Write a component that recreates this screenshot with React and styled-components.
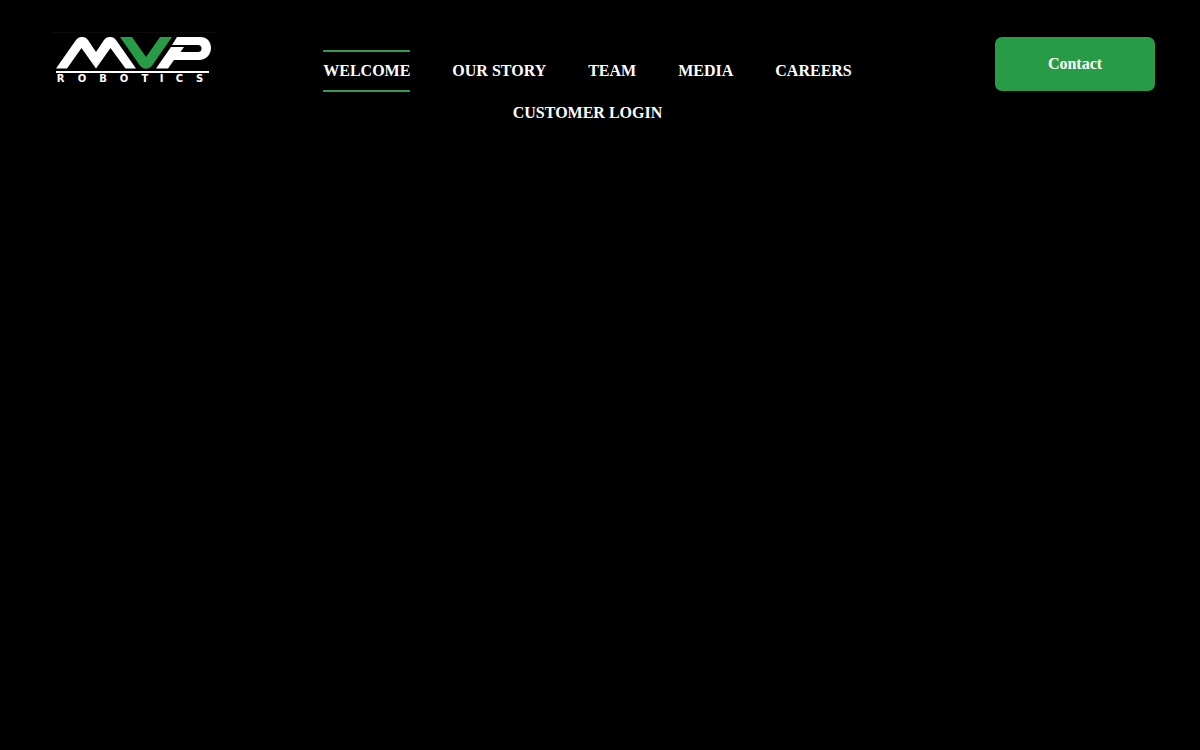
import React from 'react';
import styled, { createGlobalStyle } from 'styled-components';

const GlobalStyle = createGlobalStyle`
  * {
    box-sizing: border-box;
  }

  body {
    margin: 0;
    min-height: 100vh;
    background-color: #000;
    color: #fff;
    font-family: 'Liberation Serif', 'Times New Roman', serif;
    font-size: 16px;
  }
`;

const HeaderContainer = styled.header`
  display: flex;
  align-items: flex-start;
  padding: 32px 45px 0 52px;
`;

const LogoLink = styled.a`
  flex: 0 0 164px;
  border-top: 1px solid #0b0b0b;

  svg {
    display: block;
    width: 100%;
    height: auto;
  }
`;

const Nav = styled.nav`
  flex: 1;
  padding: 18px 100px 0 64px;
`;

const Menu = styled.ul`
  display: flex;
  flex-wrap: wrap;
  justify-content: center;
  column-gap: 42px;
  margin: 0;
  padding: 0;
  list-style: none;
`;

const MenuLink = styled.a`
  display: block;
  border-top: 2px solid ${(props) => (props.$active ? '#319b56' : 'transparent')};
  border-bottom: 2px solid ${(props) => (props.$active ? '#319b56' : 'transparent')};
  color: #fff;
  font-weight: bold;
  line-height: 38px;
  text-decoration: none;
  text-transform: uppercase;
  white-space: nowrap;
`;

const ContactButton = styled.button`
  flex: 0 0 160px;
  height: 54px;
  margin-top: 5px;
  border: none;
  border-radius: 7px;
  background-color: #289b46;
  color: #fff;
  font-family: inherit;
  font-size: 16px;
  font-weight: bold;
  cursor: pointer;
`;

const LogoText = styled.text`
  fill: #fff;
  font-family: 'DejaVu Sans', sans-serif;
  font-size: 10px;
  font-weight: bold;
  text-anchor: middle;
`;

const links = [
  { label: 'Welcome', href: '#welcome', active: true },
  { label: 'Our Story', href: '#story' },
  { label: 'Team', href: '#team' },
  { label: 'Media', href: '#media' },
  { label: 'Careers', href: '#careers' },
  { label: 'Customer Login', href: '#login' },
];

const Logo = () => (
  <svg viewBox="52 33 164 53" aria-hidden="true">
    <path
      fill="#fff"
      d="M56 68.5 76 40Q78.2 37 81 37H83Q86 37 88 40L96 52 104 40Q106 37 109 37H111Q114 37 116 40L136 68.5H125.5L110.5 48 96 68.5 81.5 48 67 68.5Z"
    />
    <path
      fill="#289b46"
      d="M120 37H132L146 57 160 37H172L152.5 65Q150 68.7 146 68.7T139.500 65Z"
    />
    <path
      fill="#fff"
      d="M177 37H200C207 37 211 41.500 211 48S206 60 199 60H174L168 68.500H156L171 47H184L180.500 52H198Q201.500 52 201.500 48.500T198 45H172Z"
    />
    <path fill="#fff" d="M56 71H209V73H56Z" />
    <LogoText y="82" x="60.5 82 103 124 145 161.5 179.5 199.5">
      ROBOTICS
    </LogoText>
  </svg>
);

const App = () => {
  return (
    <>
      <GlobalStyle />
      <HeaderContainer>
        <LogoLink href="#welcome" aria-label="MVP Robotics">
          <Logo />
        </LogoLink>
        <Nav>
          <Menu>
            {links.map((link) => (
              <li key={link.label}>
                <MenuLink href={link.href} $active={link.active}>
                  {link.label}
                </MenuLink>
              </li>
            ))}
          </Menu>
        </Nav>
        <ContactButton type="button">Contact</ContactButton>
      </HeaderContainer>
    </>
  );
};

export default App;
